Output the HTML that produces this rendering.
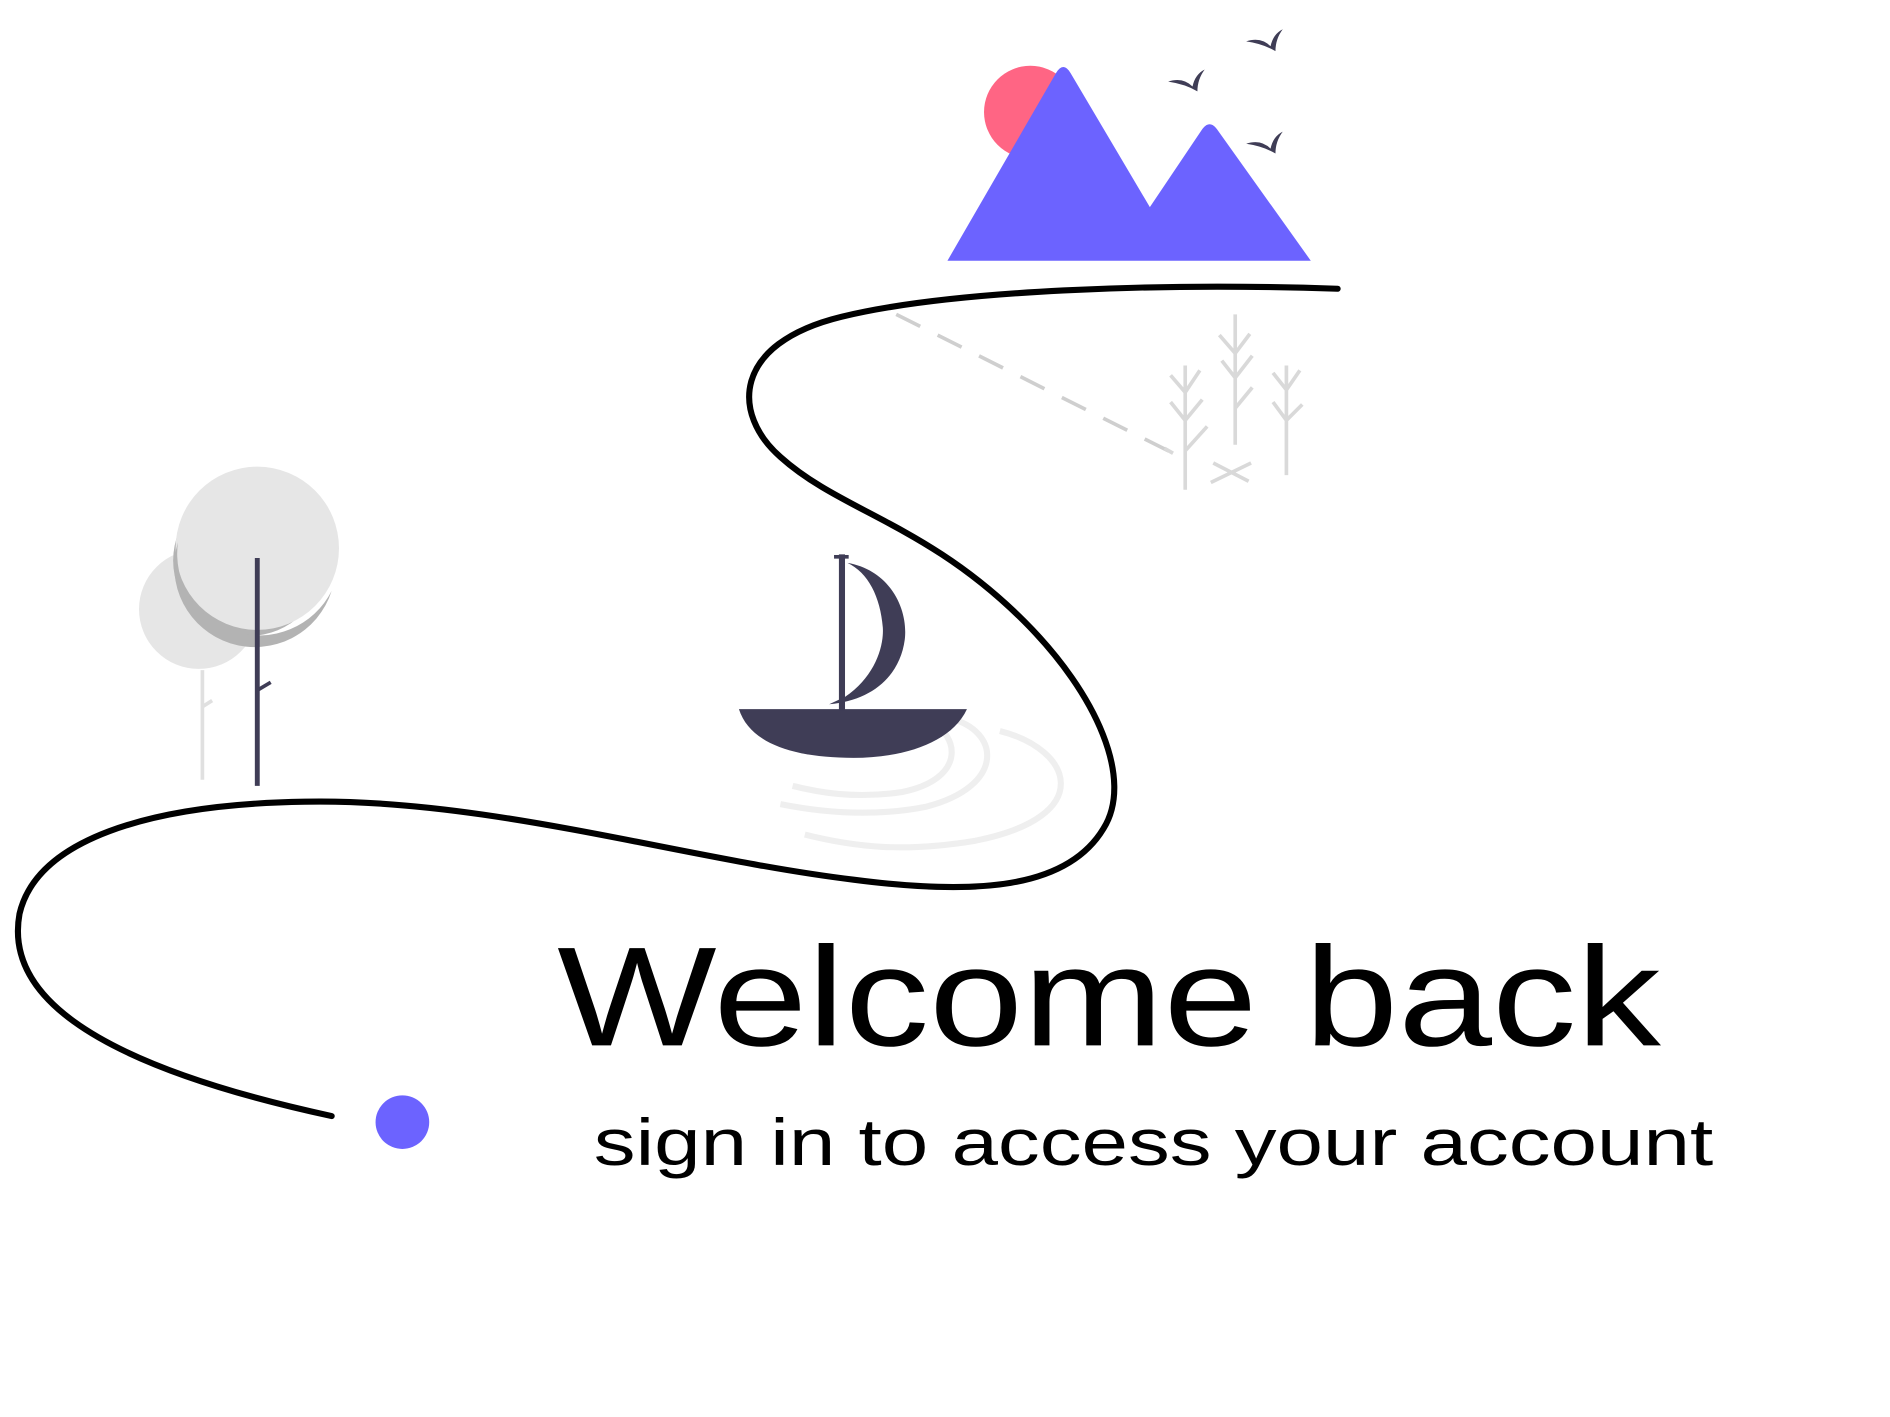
<!DOCTYPE html>
<html><head><meta charset="utf-8"><style>html,body{margin:0;padding:0;background:#fff;width:1890px;height:1417px;overflow:hidden}svg{display:block}</style></head>
<body>
<svg width="1890" height="1417" viewBox="0 0 1550 1163" preserveAspectRatio="none" xmlns="http://www.w3.org/2000/svg">
<rect width="1550" height="1163" fill="#fff"/>
<circle cx="845" cy="92" r="38" fill="#ff6584"/>
<path d="M777 214 L866 60 Q872 50 878 60 L943 170 L986 106 Q992 98 998 106 L1075 214 Z" fill="#6c63ff"/>
<g fill="#3f3d56">
<path d="M1022 34 Q1034 30 1042 38 Q1044 28 1052 24 Q1046 32 1046 42 Q1036 36 1022 34Z"/>
<path d="M958 67 Q970 63 978 71 Q980 61 988 57 Q982 65 982 75 Q972 69 958 67Z"/>
<path d="M1022 118 Q1034 114 1042 122 Q1044 112 1052 108 Q1046 116 1046 126 Q1036 120 1022 118Z"/>
</g>
<line x1="735" y1="258" x2="968" y2="375" stroke="#cfcfcf" stroke-width="3" stroke-dasharray="22 16"/>
<g stroke="#d9d9d9" stroke-width="3" fill="none">
<path d="M972 300 V402 M972 322 L960 308 M972 322 L984 304 M972 345 L960 330 M972 345 L986 328 M972 370 L990 350"/>
<path d="M1013 258 V365 M1013 290 L1000 275 M1013 290 L1025 274 M1013 310 L1002 296 M1013 310 L1027 292 M1013 335 L1027 318"/>
<path d="M1055 300 V390 M1055 320 L1044 306 M1055 320 L1066 304 M1055 345 L1044 330 M1055 345 L1068 332"/>
<path d="M993 396 L1026 380 M995 380 L1024 395 M955 368 L962 372"/>
</g>
<path d="M1097 237 C950 232 780 238 690 260 C600 282 600 340 640 375 C690 420 760 430 840 510 C900 570 930 640 905 680 C875 730 800 735 700 722 C560 705 400 655 250 658 C120 660 30 690 16 750 C5 810 60 870 272 916" fill="none" stroke="#000" stroke-width="5" stroke-linecap="round"/>
<circle cx="330" cy="921" r="22" fill="#6c63ff"/>
<circle cx="163" cy="500" r="49" fill="#e6e6e6"/>
<circle cx="204" cy="460" r="62" fill="#b3b3b3"/>
<circle cx="211" cy="450" r="67" fill="#e6e6e6"/>
<path d="M146 445 A67 67 0 0 0 272 485 A62 62 0 0 1 146 445Z" fill="#b3b3b3"/>
<line x1="166" y1="550" x2="166" y2="640" stroke="#e0e0e0" stroke-width="3"/>
<line x1="166" y1="580" x2="174" y2="575" stroke="#e0e0e0" stroke-width="3"/>
<line x1="211" y1="458" x2="211" y2="645" stroke="#3f3d56" stroke-width="4"/>
<line x1="212" y1="566" x2="222" y2="560" stroke="#3f3d56" stroke-width="3"/>
<g fill="none" stroke="#efefef" stroke-width="5">
<path d="M760 590 C790 605 790 640 740 650 C700 656 670 650 650 645"/>
<path d="M780 590 C820 600 825 645 760 662 C720 670 680 668 640 660"/>
<path d="M820 600 C880 615 900 670 800 690 C740 700 700 695 660 685"/>
</g>
<path d="M606 582 L793 582 C780 610 740 622 700 622 C650 622 615 610 606 582Z" fill="#3f3d56"/>
<rect x="688" y="455" width="5" height="128" fill="#3f3d56"/>
<path d="M684 457 L696 457" stroke="#3f3d56" stroke-width="3"/>
<path d="M695 462 C730 468 745 500 742 525 C738 555 715 575 680 578 L693 572 C718 555 725 530 724 515 C722 490 712 470 695 462Z" fill="#3f3d56"/>
<text x="457" y="858" font-family="Liberation Sans, sans-serif" font-size="116" textLength="905" lengthAdjust="spacingAndGlyphs" fill="#000">Welcome back</text>
<text x="487" y="956" font-family="Liberation Sans, sans-serif" font-size="54" textLength="918" lengthAdjust="spacingAndGlyphs" fill="#000">sign in to access your account</text>
</svg>
</body></html>
